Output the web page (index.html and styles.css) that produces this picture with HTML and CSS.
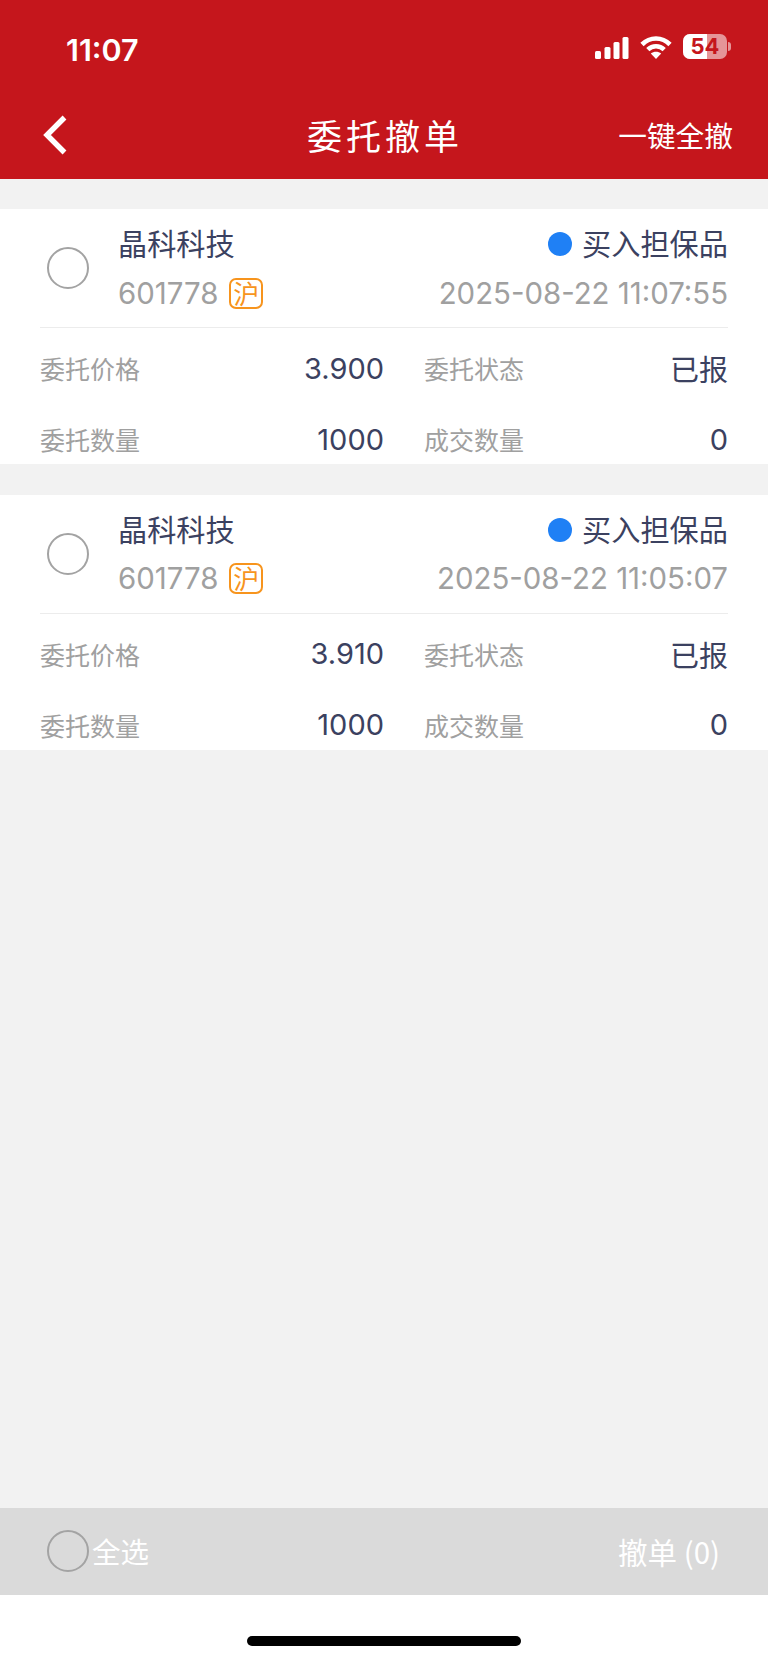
FILE: index.html
```html
<!DOCTYPE html>
<html lang="zh">
<head>
<meta charset="utf-8">
<title>委托撤单</title>
<link rel="stylesheet" href="styles.css">
</head>
<body>
<div class="page">
  <header class="header">
    <div class="status">
      <span class="time">11:07</span>
      <div class="status-icons">
        <svg class="signal" width="34" height="22" viewBox="0 0 34 22"><rect x="0" y="14" width="6" height="8" rx="1.5"/><rect x="9.5" y="10" width="6" height="12" rx="1.5"/><rect x="18.5" y="5" width="6" height="17" rx="1.5"/><rect x="27.5" y="0" width="6" height="22" rx="1.5"/></svg>
        <svg class="wifi" width="32" height="24" viewBox="0 0 32 24"><path class="wifi-arc" d="M2 9.5C10 1.5 22 1.5 30 9.5"/><path class="wifi-arc" d="M7.8 14.6C12.4 10.2 19.6 10.2 24.2 14.6"/><path class="wifi-dot" d="M16 24l-5.2-5.4c3-2.6 7.4-2.6 10.4 0z"/></svg>
        <div class="battery"><div class="battery-fill"></div><span class="battery-text">54</span><div class="battery-nub"></div></div>
      </div>
    </div>
    <nav class="nav">
      <svg class="back" width="26" height="42" viewBox="0 0 26 42"><path d="M22.5 3.5L5 21l17.5 17.5"/></svg>
      <h1 class="title">委托撤单</h1>
      <span class="nav-action">一键全撤</span>
    </nav>
  </header>

  <main class="list">
    <section class="card">
      <div class="card-head">
        <span class="check"></span>
        <div class="info">
          <div class="info-row">
            <span class="name">晶科科技</span>
            <span class="type"><i class="dot"></i>买入担保品</span>
          </div>
          <div class="info-row info-sub">
            <span class="code">601778<b class="badge">沪</b></span>
            <span class="date">2025-08-22 11:07:55</span>
          </div>
        </div>
      </div>
      <div class="fields">
        <div class="field"><span class="label">委托价格</span><span class="value">3.900</span></div>
        <div class="field"><span class="label">委托状态</span><span class="value value-cjk">已报</span></div>
        <div class="field"><span class="label">委托数量</span><span class="value">1000</span></div>
        <div class="field"><span class="label">成交数量</span><span class="value">0</span></div>
      </div>
    </section>

    <section class="card">
      <div class="card-head">
        <span class="check"></span>
        <div class="info">
          <div class="info-row">
            <span class="name">晶科科技</span>
            <span class="type"><i class="dot"></i>买入担保品</span>
          </div>
          <div class="info-row info-sub">
            <span class="code">601778<b class="badge">沪</b></span>
            <span class="date">2025-08-22 11:05:07</span>
          </div>
        </div>
      </div>
      <div class="fields">
        <div class="field"><span class="label">委托价格</span><span class="value">3.910</span></div>
        <div class="field"><span class="label">委托状态</span><span class="value value-cjk">已报</span></div>
        <div class="field"><span class="label">委托数量</span><span class="value">1000</span></div>
        <div class="field"><span class="label">成交数量</span><span class="value">0</span></div>
      </div>
    </section>
  </main>

  <footer class="footer">
    <div class="actions">
      <div class="select-all"><span class="check"></span><span>全选</span></div>
      <span class="cancel">撤单 (0)</span>
    </div>
    <div class="home-area"><div class="home-bar"></div></div>
  </footer>
</div>
</body>
</html>
```

FILE: styles.css
```css
* { box-sizing: border-box; }
html, body { margin: 0; padding: 0; }
body {
  width: 768px;
  height: 1663px;
  overflow: hidden;
  font-family: Inter, "Noto Sans CJK SC", sans-serif;
  background: #f2f2f2;
}
.page { height: 1663px; display: flex; flex-direction: column; }

.header { height: 179px; background: #c5161c; color: #fff; flex: none; }
.status {
  height: 92px;
  padding: 32px 41px 0 66px;
  display: flex;
  justify-content: space-between;
  align-items: flex-start;
}
.time { font-size: 30.5px; font-weight: 600; line-height: 36px; }
.status-icons { display: flex; align-items: center; gap: 11px; padding-top: 2px; }
.signal { fill: #fff; display: block; margin-top: 3px; }
.wifi { display: block; }
.wifi-arc { fill: none; stroke: #fff; stroke-width: 4.6; }
.wifi-dot { fill: #fff; }
.battery {
  position: relative;
  width: 44px;
  height: 25px;
  border-radius: 7px;
  background: rgba(255,255,255,.55);
  text-align: center;
}
.battery-fill { position: absolute; left: 0; top: 0; bottom: 0; width: 24px; background: #fff; border-radius: 7px 0 0 7px; }
.battery-text { position: relative; font-size: 22px; font-weight: 700; line-height: 25px; color: #c5161c; display: block; }
.battery-nub { position: absolute; left: 45px; top: 8px; width: 3px; height: 9px; border-radius: 0 3px 3px 0; background: rgba(255,255,255,.55); }

.nav {
  height: 87px;
  padding: 0 35px 2px 42px;
  display: flex;
  align-items: center;
  justify-content: space-between;
  position: relative;
}
.back { fill: none; display: block; }
.back path { stroke: #fff; stroke-width: 5.4; fill: none; }
.title {
  position: absolute;
  left: 2px;
  right: 0;
  top: 21px;
  margin: 0;
  text-align: center;
  font-family: "Noto Sans CJK SC", sans-serif;
  font-size: 35px;
  font-weight: 400;
  line-height: 44px;
  letter-spacing: 4px;
}
.nav-action { font-family: "Noto Sans CJK SC", sans-serif; font-size: 28.7px; line-height: 40px; }

.list { flex: 1; padding-top: 30px; display: flex; flex-direction: column; gap: 30.5px; }
.card { height: 255px; background: #fff; padding: 0 40px; color: #3b4160; }
.card-head {
  height: 119px;
  border-bottom: 1px solid #ececec;
  display: flex;
  align-items: center;
  gap: 29px;
}
.check {
  flex: none;
  width: 42px;
  height: 42px;
  margin-left: 7px;
  border: 2px solid #a3a3a3;
  border-radius: 50%;
  display: block;
}
.info { flex: 1; display: flex; flex-direction: column; padding-bottom: 1px; }
.info-row { display: flex; justify-content: space-between; align-items: center; height: 51px; }
.name, .type { font-family: "Noto Sans CJK SC", sans-serif; font-size: 29.2px; }
.type { display: flex; align-items: center; gap: 10px; }
.dot { width: 24px; height: 24px; margin-top: 4px; border-radius: 50%; background: #1f80f5; display: block; }
.info-sub { color: #a0a0a0; font-size: 29.4px; }
.code { display: flex; align-items: center; gap: 11px; }
.badge {
  width: 34px;
  height: 31px;
  border: 2px solid #f7941d;
  border-radius: 7px;
  color: #f7941d;
  font-family: "Noto Sans CJK SC", sans-serif;
  font-size: 26px;
  font-weight: 400;
  line-height: 26px;
  text-align: center;
}

.fields {
  padding-top: 17px;
  display: grid;
  grid-template-columns: 344px 1fr;
  column-gap: 40px;
  row-gap: 25px;
  grid-auto-rows: 46px;
}
.field { display: flex; justify-content: space-between; align-items: center; }
.label { font-family: "Noto Sans CJK SC", sans-serif; font-size: 25px; color: #a0a0a0; }
.value { font-size: 29px; }
.value-cjk { font-family: "Noto Sans CJK SC", sans-serif; }

.footer { flex: none; }
.actions {
  height: 87px;
  background: #dadada;
  color: #fff;
  padding: 0 48px 2px 40px;
  display: flex;
  justify-content: space-between;
  align-items: center;
  font-family: "Noto Sans CJK SC", sans-serif;
  font-size: 28.5px;
}
.select-all { display: flex; align-items: center; gap: 3px; }
.cancel { font-size: 29.5px; }
.home-area { height: 68px; background: #fff; padding-top: 41px; }
.home-bar { width: 274px; height: 10px; margin: 0 auto; border-radius: 5px; background: #000; }
```
